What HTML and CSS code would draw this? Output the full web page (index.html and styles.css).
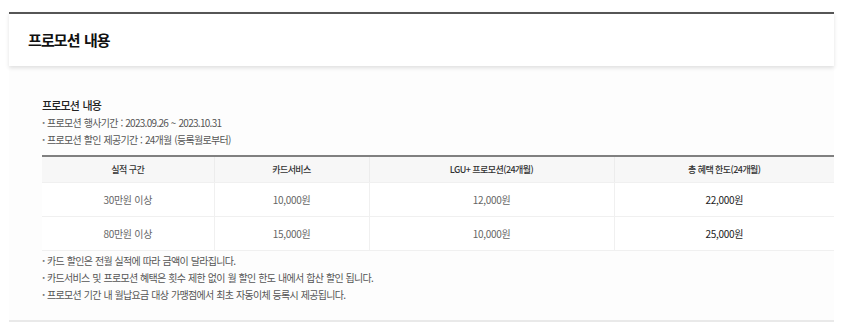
FILE: index.html
```html
<!DOCTYPE html>
<html lang="ko">
<head>
<meta charset="utf-8">
<link rel="stylesheet" href="styles.css">
</head>
<body>
<div class="wrap">
  <div class="panel-head">
    <h2 class="panel-title">프로모션 내용</h2>
  </div>
  <div class="panel-body">
    <h3 class="sub-title">프로모션 내용</h3>
    <ul class="dot-list">
      <li>프로모션 행사기간 : 2023.09.26 ~ 2023.10.31</li>
      <li>프로모션 할인 제공기간 : 24개월 (등록월로부터)</li>
    </ul>
    <table class="promo-table">
      <colgroup>
        <col class="c1"><col class="c2"><col class="c3"><col class="c4">
      </colgroup>
      <thead>
        <tr><th>실적 구간</th><th>카드서비스</th><th>LGU+ 프로모션(24개월)</th><th>총 혜택 한도(24개월)</th></tr>
      </thead>
      <tbody>
        <tr><td>30만원 이상</td><td>10,000원</td><td>12,000원</td><td class="total">22,000원</td></tr>
        <tr><td>80만원 이상</td><td>15,000원</td><td>10,000원</td><td class="total">25,000원</td></tr>
      </tbody>
    </table>
    <ul class="dot-list notes">
      <li>카드 할인은 전월 실적에 따라 금액이 달라집니다.</li>
      <li>카드서비스 및 프로모션 혜택은 횟수 제한 없이 월 할인 한도 내에서 합산 할인 됩니다.</li>
      <li>프로모션 기간 내 월납요금 대상 가맹점에서 최초 자동이체 등록시 제공됩니다.</li>
    </ul>
  </div>
</div>
</body>
</html>
```
FILE: styles.css
```css
* { box-sizing: border-box; }
html, body { margin: 0; padding: 0; background: #fff; }
body {
  font-family: "Noto Sans CJK KR", "Noto Sans", sans-serif;
  color: #333;
}
.wrap {
  margin: 12px 9px 0 9px;
  width: 825px;
}
.panel-head {
  border-top: 2px solid #555;
  height: 54px;
  display: flex;
  align-items: center;
  padding-left: 19px;
  background: #fff;
  box-shadow: 0 2px 4px rgba(0,0,0,0.12);
  position: relative;
  z-index: 1;
}
.panel-title {
  margin: 0;
  font-size: 15px;
  font-weight: 700;
  color: #111;
  letter-spacing: -0.9px;
  word-spacing: 1px;
  line-height: 20px;
}
.panel-body {
  background: #fdfdfd;
  padding: 31px 0 17px 33px;
  border-bottom: 2px solid #e9e9e9;
}
.sub-title {
  margin: 0;
  font-size: 11px;
  font-weight: 500;
  color: #222;
  line-height: 17px;
  letter-spacing: -0.9px;
  word-spacing: 1.5px;
}
.dot-list {
  list-style: none;
  margin: 0;
  padding: 0;
}
.dot-list li {
  font-size: 10px;
  line-height: 17px;
  color: #555;
  letter-spacing: -0.7px;
  word-spacing: 0.6px;
}
.dot-list li::before {
  content: "·";
  display: inline-block;
  width: 5px;
  letter-spacing: 0;
  font-weight: 700;
  color: #777;
}
.promo-table {
  margin-top: 7px;
  width: 792px;
  border-collapse: collapse;
  table-layout: fixed;
  border-top: 2px solid #808080;
}
.c1 { width: 172px; }
.c2 { width: 155px; }
.c3 { width: 245px; }
.c4 { width: 220px; }
.promo-table th {
  height: 26px;
  padding: 0;
  background: #f7f7f7;
  font-size: 9px;
  font-weight: 500;
  color: #333;
  letter-spacing: -0.55px;
  border-left: 1px solid #ececec;
  border-bottom: 1px solid #f0f0f0;
}
.promo-table td {
  height: 34px;
  padding: 0;
  text-align: center;
  font-size: 10px;
  color: #666;
  letter-spacing: -0.3px;
  background: #fff;
  border-left: 1px solid #f0f0f0;
  border-bottom: 1px solid #f0f0f0;
}
.promo-table th:first-child,
.promo-table td:first-child { border-left: 0; }
.promo-table td.total { color: #222; }
.notes { margin-top: 1px; }
```
